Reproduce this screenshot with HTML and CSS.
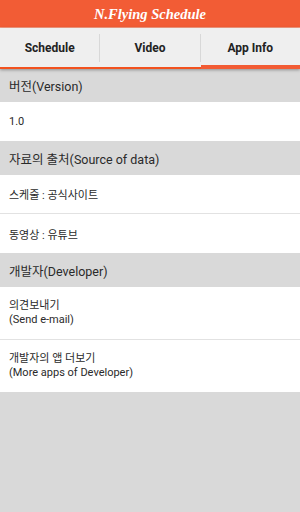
FILE: index.html
```html
<!DOCTYPE html>
<html lang="ko">
<head>
<meta charset="utf-8">
<title>N.Flying Schedule</title>
<link rel="stylesheet" href="styles.css">
</head>
<body>
<div class="app">
  <header class="appbar"><h1 class="title">N.Flying Schedule</h1></header>
  <nav class="tabs">
    <div class="tab">Schedule</div>
    <div class="sep"><span class="sep-line"></span></div>
    <div class="tab">Video</div>
    <div class="sep"><span class="sep-line"></span></div>
    <div class="tab tab-active">App Info</div>
  </nav>
  <main class="content">
    <div class="section-h">버전(Version)</div>
    <div class="row">1.0</div>
    <div class="section-h tall">자료의 출처(Source of data)</div>
    <div class="row divided">스케줄 : 공식사이트</div>
    <div class="row">동영상 : 유튜브</div>
    <div class="section-h tall">개발자(Developer)</div>
    <div class="row double divided">의견보내기<br>(Send e-mail)</div>
    <div class="row double">개발자의 앱 더보기<br>(More apps of Developer)</div>
  </main>
</div>
</body>
</html>
```
FILE: styles.css
```css
* { box-sizing: border-box; margin: 0; padding: 0; }
html, body { width: 300px; height: 512px; overflow: hidden; }
body {
  background: #d9d9d9;
  font-family: Roboto, "Noto Sans CJK KR", "Noto Sans", sans-serif;
  color: #2a2a2a;
}
.app { display: flex; flex-direction: column; min-height: 512px; }
.appbar {
  height: 28px;
  background: #f25c35;
  border-bottom: 1px solid #f59a80;
  display: flex;
  align-items: center;
  justify-content: center;
}
.title {
  font-family: "Liberation Serif", "DejaVu Serif", serif;
  font-style: italic;
  font-weight: bold;
  font-size: 14.5px;
  color: #fff;
  margin-top: 2px;
}
.tabs {
  display: flex;
  height: 41px;
  background: #efefef;
  position: relative;
  z-index: 1;
  box-shadow: 0 1px 3px rgba(0,0,0,0.35);
}
.tab {
  flex: 1;
  display: flex;
  align-items: center;
  justify-content: center;
  font-size: 12px;
  font-weight: bold;
  color: #222;
  border-bottom: 2px solid #f2521f;
  padding-top: 1px;
}
.tab-active {
  border-bottom: 4px solid #f25c35;
  padding-top: 3px;
}
.sep {
  width: 1px;
  display: flex;
  flex-direction: column;
  border-bottom: 2px solid #f2521f;
}
.sep-line { flex: 1; margin: 6px 0 5px; background: #d8d8d8; }
.content { display: flex; flex-direction: column; }
.section-h {
  height: 33px;
  display: flex;
  align-items: center;
  padding-left: 9px;
  font-size: 12.5px;
  color: #2a2a2a;
  background: #d9d9d9;
}
.section-h.tall { height: 34px; }
.row {
  height: 39px;
  display: flex;
  align-items: center;
  padding-left: 9px;
  font-size: 11px;
  color: #2a2a2a;
  background: #fff;
}
.row.divided { border-bottom: 1px solid #e2e2e2; }
.row.double {
  height: 52px;
  line-height: 14px;
}
.row.double.divided { height: 53px; }
```
